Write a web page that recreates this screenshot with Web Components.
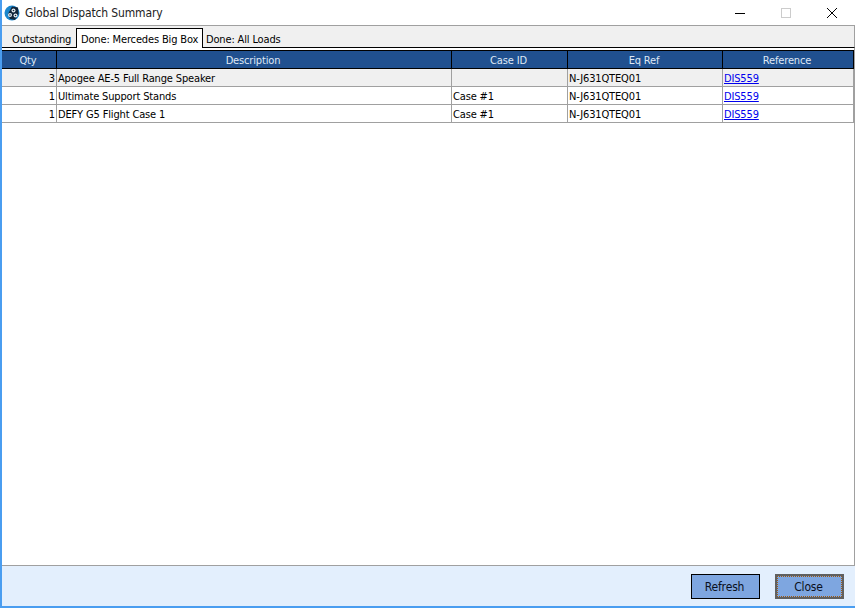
<!DOCTYPE html>
<html>
<head>
<meta charset="utf-8">
<title>Global Dispatch Summary</title>
<style>
html, body { margin: 0; padding: 0; height: 100%; background: #fff; overflow: hidden; }
body { font: 11px "DejaVu Sans Condensed", "DejaVu Sans", sans-serif; color: #000; letter-spacing: -0.15px; }
</style>
</head>
<body>
<dispatch-window>
    <dispatch-tabs></dispatch-tabs>
    <dispatch-grid></dispatch-grid>
</dispatch-window>
<script>
const COLS = '55px 395px 116px 155px 131px';

class DispatchWindow extends HTMLElement {
    constructor() {
        super();
        this.attachShadow({ mode: 'open' }).innerHTML = `
<style>
:host { display: flex; flex-direction: column; box-sizing: border-box; width: 855px; height: 608px;
  border-left: 2px solid #4a9df0; border-bottom: 2px solid #4a9df0; background: #fff; }
.title { height: 25px; display: flex; align-items: center; flex: none; font-size: 12px; margin-left: -2px; color: #222; }
.title svg.logo { margin: 0 5px 0 4px; flex: none; }
.title span { flex: 1; }
.ctl { width: 46px; height: 25px; display: flex; align-items: center; justify-content: center; flex: none; }
.body { flex: 1; min-height: 0; display: flex; flex-direction: column; }
.foot { flex: none; height: 41px; box-sizing: border-box; border-top: 1px solid #a0a0a0; background: #e3effd;
  display: flex; justify-content: flex-end; align-items: center; gap: 15px; padding: 1px 11px 0 0; }
</style>
<div class="title">
  <svg class="logo" width="16" height="16" viewBox="0 0 16 16">
    <circle cx="8" cy="8" r="7.5" fill="#1c86cc"/>
    <path d="M4 9 L8 1.5 L14 2.5 L14.5 9 L11 15 L6 14 Z" fill="#10243a"/>
    <circle cx="9.5" cy="5.5" r="2" fill="#e4ecf2"/><circle cx="9.5" cy="5.5" r=".8" fill="#10243a"/>
    <circle cx="6" cy="10" r="2" fill="#e4ecf2"/><circle cx="6" cy="10" r=".8" fill="#10243a"/>
    <circle cx="11.5" cy="10.5" r="2" fill="#e4ecf2"/><circle cx="11.5" cy="10.5" r=".8" fill="#10243a"/>
  </svg>
  <span>Global Dispatch Summary</span>
  <div class="ctl"><svg width="12" height="12" viewBox="0 0 12 12"><path d="M1 6.5H11" stroke="#000" fill="none"/></svg></div>
  <div class="ctl"><svg width="12" height="12" viewBox="0 0 12 12"><rect x="1.5" y="1.5" width="9" height="9" fill="none" stroke="#ccc"/></svg></div>
  <div class="ctl"><svg width="12" height="12" viewBox="0 0 12 12"><path d="M1 1L11 11M11 1L1 11" stroke="#000" fill="none"/></svg></div>
</div>
<div class="body"><slot></slot></div>
<div class="foot">
  <dispatch-button>Refresh</dispatch-button>
  <dispatch-button focused>Close</dispatch-button>
</div>`;
    }
}

class DispatchTabs extends HTMLElement {
    constructor() {
        super();
        this.attachShadow({ mode: 'open' }).innerHTML = `
<style>
:host { display: flex; flex: none; box-sizing: border-box; height: 23px; background: #f0f0f0;
  border-top: 1px solid #a0a0a0; border-right: 1px solid #a0a0a0; border-bottom: 1px solid #000;
  padding: 2px 0 0 0; align-items: stretch; font-size: 11px; }
.tab { padding: 5px 3px 0 3px; white-space: nowrap; }
.tab.first { padding-left: 10px; width: 74px; box-sizing: border-box; padding-right: 0; }
.tab.on { background: #fff; border: 1px solid #000; border-bottom: 0; margin-bottom: -1px; padding: 4px 0 0 4px; width: 127px; box-sizing: border-box; }
</style>
<div class="tab first">Outstanding</div>
<div class="tab on">Done: Mercedes Big Box</div>
<div class="tab">Done: All Loads</div>`;
    }
}

class DispatchGrid extends HTMLElement {
    constructor() {
        super();
        const rows = [
            ['3', 'Apogee AE-5 Full Range Speaker', '', 'N-J631QTEQ01', 'DIS559'],
            ['1', 'Ultimate Support Stands', 'Case #1', 'N-J631QTEQ01', 'DIS559'],
            ['1', 'DEFY G5 Flight Case 1', 'Case #1', 'N-J631QTEQ01', 'DIS559']
        ];
        const head = ['Qty', 'Description', 'Case ID', 'Eq Ref', 'Reference'];
        this.attachShadow({ mode: 'open' }).innerHTML = `
<style>
:host { display: block; flex: 1; min-height: 0; background: #fff; padding-top: 2px; border-right: 1px solid #a0a0a0;
  font-size: 11px; }
.row { display: grid; grid-template-columns: ${COLS}; height: 18px; box-sizing: border-box; }
.row.head { background: #20508f; color: #dfe8f5; border-top: 1px solid #000; border-bottom: 1px solid #000; height: 19px; }
.row.head div { text-align: center; border-right: 1px solid #000; line-height: 19px; height: 17px; overflow: hidden; padding-right: 2px; }
.row.body { border-bottom: 1px solid #a0a0a0; }
.row.body.alt { background: #f0f0f0; }
.row.body div { border-right: 1px solid #a0a0a0; padding: 0 1px; line-height: 19px; height: 17px; white-space: nowrap; overflow: hidden; }
.row.body div:first-child { text-align: right; }
a { color: #00e; text-decoration: underline; }
</style>
<div class="row head">${head.map(h => `<div>${h}</div>`).join('')}</div>
${rows.map((r, i) => `<div class="row body${i === 0 ? ' alt' : ''}">
  <div>${r[0]}</div><div>${r[1]}</div><div>${r[2]}</div><div>${r[3]}</div><div><a href="#">${r[4]}</a></div>
</div>`).join('')}`;
    }
}

class DispatchButton extends HTMLElement {
    constructor() {
        super();
        this.attachShadow({ mode: 'open' }).innerHTML = `
<style>
:host { display: block; box-sizing: border-box; width: 69px; height: 25px; background: #7ea6e0; border: 1px solid #000;
  font-size: 12px; color: #0a1020; }
:host([focused]) { border: 2px solid #606060; }
.in { height: 100%; box-sizing: border-box; display: flex; align-items: center; justify-content: center; padding-right: 2px; }
:host([focused]) .in { border: 1px dotted #a05a10; }
</style>
<div class="in"><slot></slot></div>`;
    }
}

customElements.define('dispatch-window', DispatchWindow);
customElements.define('dispatch-tabs', DispatchTabs);
customElements.define('dispatch-grid', DispatchGrid);
customElements.define('dispatch-button', DispatchButton);
</script>
</body>
</html>
